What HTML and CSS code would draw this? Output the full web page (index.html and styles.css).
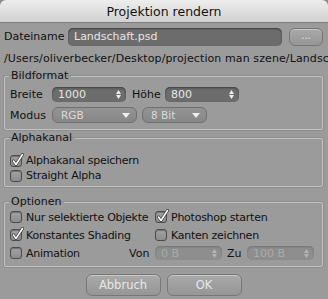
FILE: index.html
```html
<!DOCTYPE html>
<html lang="de">
<head>
  <meta charset="UTF-8">
  <title>Projektion rendern</title>
  <link rel="stylesheet" href="styles.css">
</head>
<body>
<div class="window">
  <div class="titlebar">Projektion rendern</div>
  <div class="content">
    <div class="file-row">
      <span class="label">Dateiname</span>
      <span class="field file-field">Landschaft.psd</span>
      <span class="btn dots">...</span>
    </div>
    <div class="path">/Users/oliverbecker/Desktop/projection man szene/Landsc</div>

    <fieldset class="group format">
      <legend>Bildformat</legend>
      <div class="row">
        <span class="label lbl-first">Breite</span>
        <span class="field num">1000
          <svg class="spin" width="5" height="9" viewBox="0 0 5 9"><path d="M0 4L2.5 0L5 4Z M0 5L2.5 9L5 5Z" fill="#eee"/></svg>
        </span>
        <span class="label lbl-hoehe">Höhe</span>
        <span class="field num">800
          <svg class="spin" width="5" height="9" viewBox="0 0 5 9"><path d="M0 4L2.5 0L5 4Z M0 5L2.5 9L5 5Z" fill="#eee"/></svg>
        </span>
      </div>
      <div class="row">
        <span class="label lbl-first">Modus</span>
        <span class="select mode">RGB
          <svg width="8" height="5" viewBox="0 0 8 5"><path d="M0 0H8L4 5Z" fill="#eee"/></svg>
        </span>
        <span class="select depth">8 Bit
          <svg width="8" height="5" viewBox="0 0 8 5"><path d="M0 0H8L4 5Z" fill="#eee"/></svg>
        </span>
      </div>
    </fieldset>

    <fieldset class="group alpha">
      <legend>Alphakanal</legend>
      <label class="check on"><span class="box"></span>Alphakanal speichern</label>
      <label class="check"><span class="box"></span>Straight Alpha</label>
    </fieldset>

    <fieldset class="group options">
      <legend>Optionen</legend>
      <div class="opt-grid">
        <label class="check"><span class="box"></span>Nur selektierte Objekte</label>
        <label class="check on"><span class="box"></span>Photoshop starten</label>
        <label class="check on"><span class="box"></span>Konstantes Shading</label>
        <label class="check"><span class="box"></span>Kanten zeichnen</label>
      </div>
      <div class="anim-row">
        <label class="check"><span class="box"></span>Animation</label>
        <span class="label lbl-von">Von</span>
        <span class="field num off">0 B
          <svg class="spin" width="5" height="9" viewBox="0 0 5 9"><path d="M0 4L2.5 0L5 4Z M0 5L2.5 9L5 5Z" fill="#b4b4b4"/></svg>
        </span>
        <span class="label lbl-zu">Zu</span>
        <span class="field num off">100 B
          <svg class="spin" width="5" height="9" viewBox="0 0 5 9"><path d="M0 4L2.5 0L5 4Z M0 5L2.5 9L5 5Z" fill="#b4b4b4"/></svg>
        </span>
      </div>
    </fieldset>

    <div class="actions">
      <span class="btn">Abbruch</span>
      <span class="btn">OK</span>
    </div>
  </div>
</div>
</body>
</html>
```

FILE: styles.css
```css
html { background:#8a8a8a; }
body { margin:0; font-family:"DejaVu Sans", sans-serif; font-size:11px; color:#111; }
.window { width:328px; height:299px; background:#9b9b9b; border-radius:6px 6px 0 0; overflow:hidden; }
.titlebar { height:23px; line-height:23px; text-align:center; font-size:12.5px; color:#111;
  background:linear-gradient(#ededed, #d2d2d2); border-bottom:1px solid #7c7c7c; box-sizing:border-box; }
.content { padding:0 5px 0 4px; }
.label { white-space:nowrap; }

.file-row { display:flex; align-items:center; margin-top:4px; height:19px; }
.file-row .label { width:64px; }
.field { display:flex; align-items:center; box-sizing:border-box; background:#6c6c6c; color:#e6e6e6;
  border-radius:5px; box-shadow:inset 0 1px 2px rgba(0,0,0,0.45); padding:0 5px 0 6px; white-space:nowrap; }
.file-field { width:214px; height:18px; }
.btn { display:flex; align-items:center; justify-content:center; box-sizing:border-box; color:#e8e8e8;
  background:linear-gradient(#a9a9a9, #969696); border:1px solid #777; border-radius:6px;
  box-shadow:inset 0 1px 0 rgba(255,255,255,0.35); }
.dots { width:34px; height:18px; margin-left:7px; font-size:10px; padding-bottom:3px; }

.path { margin-top:6px; height:14px; line-height:14px; white-space:nowrap; letter-spacing:0.1px; }

.group { margin:0; padding:3px 6px 6px 5px; border:1px solid #c2c2c2; box-shadow:0 0 0 1px rgba(0,0,0,0.08);
  border-radius:2px; }
.group legend { padding:0 3px 0 2px; height:14px; line-height:14px; margin-left:-1px; }
.format { margin-top:3px; }
.row { display:flex; align-items:center; height:16px; }
.row + .row { margin-top:5px; }
.lbl-first { width:42px; }
.num { height:15px; width:74px; justify-content:space-between; }
.lbl-hoehe { width:39px; padding-left:6px; box-sizing:border-box; }
.spin { flex:none; }
.select { display:flex; align-items:center; justify-content:space-between; box-sizing:border-box; height:16px;
  padding:0 6px 0 8px; color:#dadada; background:linear-gradient(#949494, #868686); border:1px solid #6f6f6f;
  border-radius:6px; font-size:10.5px; }
.mode { width:85px; }
.depth { width:65px; margin-left:5px; }

.alpha { margin-top:1px; padding:8px 6px 3px 5px; }
.check { display:flex; align-items:center; height:15px; white-space:nowrap; letter-spacing:-0.25px; }
.box { position:relative; width:12px; height:12px; box-sizing:border-box; border:1px solid #4c4c4c; border-radius:3px;
  background:linear-gradient(#a3a3a3, #8c8c8c); box-shadow:inset 0 1px 1px rgba(0,0,0,0.3); margin-right:4px; flex:none; }
.check.on .box::after { content:""; position:absolute; left:1px; top:-3px; width:12px; height:13px;
  background:url("data:image/svg+xml;utf8,<svg xmlns='http://www.w3.org/2000/svg' width='12' height='13' viewBox='0 0 12 13'><path d='M1.5 8L4 11.5L10.5 1.5' fill='none' stroke='%23333' stroke-width='3' stroke-linecap='round' stroke-linejoin='round'/><path d='M1.5 8L4 11.5L10.5 1.5' fill='none' stroke='%23fff' stroke-width='1.6' stroke-linecap='round' stroke-linejoin='round'/></svg>") no-repeat; }

.options { margin-top:8px; padding:0 6px 4px 5px; }
.opt-grid { display:grid; grid-template-columns:145px 1fr; margin-top:-1px; }
.opt-grid .check { height:18px; }
.anim-row { display:flex; align-items:center; height:18px; }
.anim-row .check { width:119px; }
.lbl-von { width:26px; }
.lbl-zu { width:25px; padding-left:5px; box-sizing:border-box; }
.num.off { width:67px; height:14px; background:#8e8e8e; color:#ababab; box-shadow:inset 0 1px 2px rgba(0,0,0,0.2); }

.actions { display:flex; justify-content:center; gap:6px; margin-top:7px; }
.actions .btn { width:75px; height:22px; font-size:11.5px; }
```
